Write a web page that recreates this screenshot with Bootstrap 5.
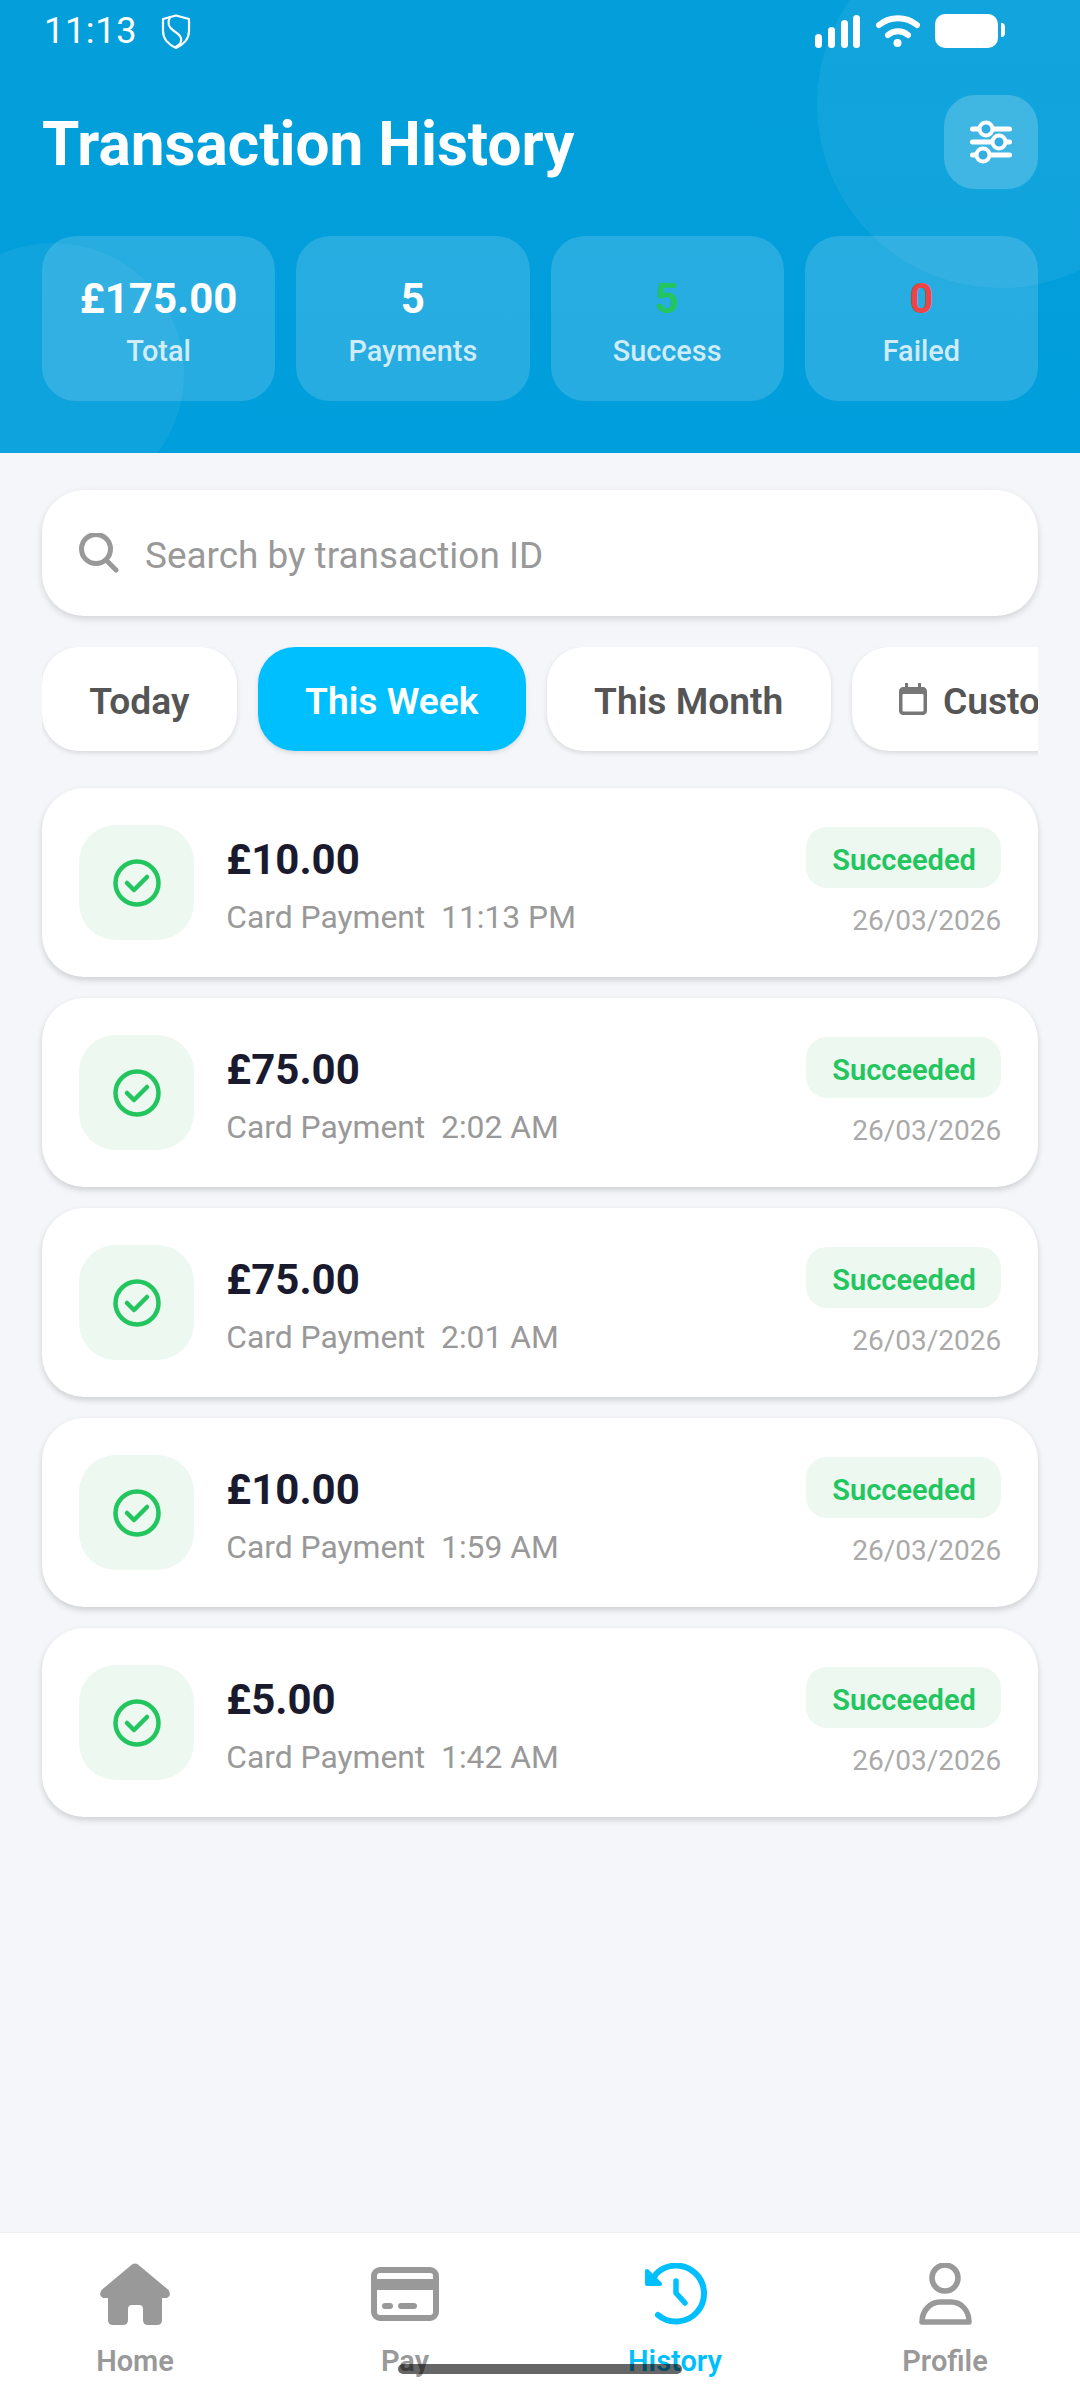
<!DOCTYPE html>
<html lang="en">
<head>
<meta charset="utf-8">
<title>Transaction History</title>
<link href="https://cdn.jsdelivr.net/npm/bootstrap@5.3.0/dist/css/bootstrap.min.css" rel="stylesheet">
<style>
html,body{margin:0;width:1080px;height:2400px;overflow:hidden}
body{font-family:Roboto,"Liberation Sans",sans-serif;background:#f4f6fa}
.app{width:1080px;height:2400px}
.hero{height:453px;padding:0 42px;background:linear-gradient(180deg,#049fda,#009edc);color:#fff;overflow:hidden;flex-shrink:0}
.blob{position:absolute;border-radius:50%;background:rgba(255,255,255,.06);pointer-events:none}
.blob-a{left:817px;top:-79px;width:367px;height:367px}
.blob-b{left:-78px;top:243px;width:262px;height:262px}
.statusline{height:95px;padding:14px 32px 0 2px;align-items:flex-start}
.clock{font-size:36px;line-height:34px;letter-spacing:.7px;margin-right:24px}
.statusicons{gap:15px}
.hero-title{font-size:60.3px;line-height:88px;font-weight:700;margin:0;padding-top:6px;letter-spacing:0}
.filter-btn{width:94px;height:94px;padding:0;border:0;border-radius:31px;background:rgba(255,255,255,.2)}
.stats{gap:21px;margin-top:47px}
.stat{flex:1 1 0;height:165px;border-radius:34px;background:rgba(255,255,255,.15);padding-top:37px}
.stat-value{font-size:42px;line-height:52px;font-weight:700}
.stat-label{font-size:28.875px;line-height:36px;font-weight:500;margin-top:8px;color:rgba(255,255,255,.78)}
.val-ok{color:#22c55e}
.val-bad{color:#ef4444}
.page{padding:37px 42px 0}
.searchbox{height:126px;border-radius:42px;background:#fff;padding-left:37px;gap:26px;box-shadow:0 3px 7px rgba(0,0,0,.14)}
.searchbox .form-control{border:0;padding:5px 0 0;font-size:36.9px;background:transparent;box-shadow:none;color:#333}
.searchbox .form-control::placeholder{color:#999}
.chips{gap:21px;margin-top:31px;overflow:hidden;padding-bottom:6px;margin-bottom:-6px}
.chip{flex-shrink:0;height:104px;padding:5px 47.3px 0;border:0;border-radius:37px;background:#fff;color:#555;font-size:37.2px;font-weight:600;box-shadow:0 2px 5px rgba(0,0,0,.12);white-space:nowrap;gap:16px}
.chip-on{background:#00bfff;color:#fff}
.chip svg{margin-top:-5px}
.txlist{gap:21px;margin-top:37px}
.txcard{border:0;border-radius:42px;box-shadow:0 3px 6px rgba(0,0,0,.16);padding:36.75px;flex-direction:row;align-items:center;gap:32px}
.txicon{width:115.5px;height:115.5px;border-radius:37px;background:#edf8f1;flex-shrink:0}
.amount{font-size:42px;line-height:50px;font-weight:700;color:#1a1a2e;margin-top:5px}
.subline{font-size:31.8px;line-height:38px;color:#999;margin-top:13px;white-space:pre}
.pill{display:block;font-size:29px;line-height:34px;font-weight:600;color:#22c55e;background:#edf8f1;border-radius:21px;padding:16px 28px 11px 26px;width:195px;text-align:center;white-space:nowrap}
.txdate{font-size:28px;line-height:36px;color:#aaa;margin-top:15px}
.tabbar{height:168px;background:#fff;border-top:1px solid #eceef2;padding-top:30px;flex-shrink:0}
.tab{width:270px;color:#999;font-size:29px;font-weight:600;line-height:34px}
.tab svg{display:block;margin-bottom:18px}
.tab-on{color:#00bfff}
.homebar{position:absolute;left:398px;top:2364px;width:284px;height:10px;border-radius:5px;background:rgba(0,0,0,.6)}
</style>
</head>
<body>
<div class="app position-relative d-flex flex-column">
  <header class="hero position-relative">
    <span class="blob blob-a"></span>
    <span class="blob blob-b"></span>
    <div class="statusline d-flex justify-content-between position-relative">
      <div class="d-flex align-items-start">
        <span class="clock">11:13</span>
        <svg width="30" height="36" viewBox="0 0 30 36" fill="none" stroke="#fff" stroke-width="2.2" stroke-linejoin="round" stroke-linecap="round"><path d="M15 1.500 28 5v12c0 8-6 14-13 17C8 31 2 25 2 17V5Z"/><path d="M9 3C6 9 7 13 13 17c6 4 9 7 6 13l-4 3"/></svg>
      </div>
      <div class="statusicons d-flex align-items-start">
        <svg width="46" height="34" viewBox="0 0 46 34" fill="#fff" style="margin-top:1px"><rect x="0" y="19" width="7" height="14" rx="3.500"/><rect x="13" y="12" width="7" height="21" rx="3.500"/><rect x="26" y="5" width="7" height="28" rx="3.500"/><rect x="38" y="0" width="7" height="33" rx="3.500"/></svg>
        <svg width="44" height="34" viewBox="0 0 44 34" fill="none" stroke="#fff" stroke-width="6" stroke-linecap="round" style="margin-top:1px"><path d="M3 10C14 1 30 1 41 10"/><path d="M12 20c6-5 14-5 20 0"/><circle cx="21.500" cy="28" r="4" fill="#fff" stroke="none"/></svg>
        <svg width="71" height="34" viewBox="0 0 71 34" fill="#fff"><rect x="0" y="0" width="63" height="34" rx="10"/><path d="M66 9h1c2 0 3 2 3 4v6c0 2-1 4-3 4h-1Z"/></svg>
      </div>
    </div>
    <div class="d-flex justify-content-between align-items-center position-relative">
      <h1 class="hero-title">Transaction History</h1>
      <button type="button" class="btn filter-btn d-flex align-items-center justify-content-center" aria-label="Filter">
        <svg width="50" height="46" viewBox="0 0 50 46" fill="none" stroke="#fff" stroke-width="5" stroke-linecap="round"><path d="M6.500 10h37M6.500 23h37M6.500 36h37"/><g fill="#33aee2" stroke-width="4"><circle cx="20" cy="10" r="6.500"/><circle cx="33" cy="23" r="6.500"/><circle cx="17" cy="36" r="6.500"/></g></svg>
      </button>
    </div>
    <div class="stats d-flex position-relative">
      <div class="stat text-center"><div class="stat-value">£175.00</div><div class="stat-label">Total</div></div>
      <div class="stat text-center"><div class="stat-value">5</div><div class="stat-label">Payments</div></div>
      <div class="stat text-center"><div class="stat-value val-ok">5</div><div class="stat-label">Success</div></div>
      <div class="stat text-center"><div class="stat-value val-bad">0</div><div class="stat-label">Failed</div></div>
    </div>
  </header>

  <main class="page flex-grow-1">
    <div class="searchbox d-flex align-items-center">
      <svg width="40" height="40" viewBox="0 0 40 40" fill="none" stroke="#999" stroke-width="5" stroke-linecap="round" class="flex-shrink-0"><circle cx="17" cy="16" r="14.500"/><path d="M27 27 37 37"/></svg>
      <input type="text" class="form-control" placeholder="Search by transaction ID">
    </div>

    <div class="chips d-flex">
      <button type="button" class="btn chip d-flex align-items-center">Today</button>
      <button type="button" class="btn chip chip-on d-flex align-items-center">This Week</button>
      <button type="button" class="btn chip d-flex align-items-center">This Month</button>
      <button type="button" class="btn chip d-flex align-items-center">
        <svg width="28" height="32" viewBox="0 0 28 32" class="flex-shrink-0"><path fill="#777" d="M6 0h3v4h10V0h3v4h2c2 0 4 2 4 4v20c0 2-2 4-4 4H4c-2 0-4-2-4-4V8c0-2 2-4 4-4h2Z"/><rect x="3.500" y="11" width="21" height="17.500" rx="1" fill="#fff"/></svg>
        <span>Custom</span>
      </button>
    </div>

    <div class="txlist d-flex flex-column">
      <div class="card txcard">
        <div class="txicon d-flex align-items-center justify-content-center"><svg width="48" height="48" viewBox="0 0 48 48" fill="none" stroke="#22c55e" stroke-width="4.500" stroke-linecap="round" stroke-linejoin="round"><circle cx="24" cy="24" r="21.500"/><path d="M14 24l7 7 13-13"/></svg></div>
        <div class="flex-grow-1"><div class="amount">£10.00</div><div class="subline">Card Payment  11:13 PM</div></div>
        <div class="text-end"><span class="badge pill">Succeeded</span><div class="txdate">26/03/2026</div></div>
      </div>
      <div class="card txcard">
        <div class="txicon d-flex align-items-center justify-content-center"><svg width="48" height="48" viewBox="0 0 48 48" fill="none" stroke="#22c55e" stroke-width="4.500" stroke-linecap="round" stroke-linejoin="round"><circle cx="24" cy="24" r="21.500"/><path d="M14 24l7 7 13-13"/></svg></div>
        <div class="flex-grow-1"><div class="amount">£75.00</div><div class="subline">Card Payment  2:02 AM</div></div>
        <div class="text-end"><span class="badge pill">Succeeded</span><div class="txdate">26/03/2026</div></div>
      </div>
      <div class="card txcard">
        <div class="txicon d-flex align-items-center justify-content-center"><svg width="48" height="48" viewBox="0 0 48 48" fill="none" stroke="#22c55e" stroke-width="4.500" stroke-linecap="round" stroke-linejoin="round"><circle cx="24" cy="24" r="21.500"/><path d="M14 24l7 7 13-13"/></svg></div>
        <div class="flex-grow-1"><div class="amount">£75.00</div><div class="subline">Card Payment  2:01 AM</div></div>
        <div class="text-end"><span class="badge pill">Succeeded</span><div class="txdate">26/03/2026</div></div>
      </div>
      <div class="card txcard">
        <div class="txicon d-flex align-items-center justify-content-center"><svg width="48" height="48" viewBox="0 0 48 48" fill="none" stroke="#22c55e" stroke-width="4.500" stroke-linecap="round" stroke-linejoin="round"><circle cx="24" cy="24" r="21.500"/><path d="M14 24l7 7 13-13"/></svg></div>
        <div class="flex-grow-1"><div class="amount">£10.00</div><div class="subline">Card Payment  1:59 AM</div></div>
        <div class="text-end"><span class="badge pill">Succeeded</span><div class="txdate">26/03/2026</div></div>
      </div>
      <div class="card txcard">
        <div class="txicon d-flex align-items-center justify-content-center"><svg width="48" height="48" viewBox="0 0 48 48" fill="none" stroke="#22c55e" stroke-width="4.500" stroke-linecap="round" stroke-linejoin="round"><circle cx="24" cy="24" r="21.500"/><path d="M14 24l7 7 13-13"/></svg></div>
        <div class="flex-grow-1"><div class="amount">£5.00</div><div class="subline">Card Payment  1:42 AM</div></div>
        <div class="text-end"><span class="badge pill">Succeeded</span><div class="txdate">26/03/2026</div></div>
      </div>
    </div>
  </main>

  <nav class="tabbar d-flex">
    <div class="tab d-flex flex-column align-items-center">
      <svg width="80" height="63" viewBox="0 0 80 63" fill="#999"><path d="M37 1.500Q40-.5 43 1.500L73.500 27Q77 33 72 35H67V57Q67 62 62 62H53Q48 62 48 57V46Q48 42 44 42H37Q33 42 33 46V57Q33 62 28 62H18Q13 62 13 57V35H8Q3 33 6.500 27Z"/></svg>
      <span>Home</span>
    </div>
    <div class="tab d-flex flex-column align-items-center">
      <svg width="80" height="63" viewBox="0 0 80 63" fill="none" stroke="#999" stroke-width="6" stroke-linecap="round"><rect x="9" y="7" width="62" height="48" rx="6"/><rect x="6" y="16" width="68" height="11" fill="#999" stroke="none"/><path d="M20 43h5M36 43h13"/></svg>
      <span>Pay</span>
    </div>
    <div class="tab tab-on d-flex flex-column align-items-center">
      <svg width="80" height="63" viewBox="0 0 80 63" fill="none" stroke="#00bfff" stroke-width="6" stroke-linecap="round" stroke-linejoin="round"><path d="M23 52A28 28 0 1 0 21 11L19 15"/><path d="M12 8V21H25Z" fill="#00bfff" stroke-width="4"/><path d="M41 18V30L50 40" stroke-width="5.500"/></svg>
      <span>History</span>
    </div>
    <div class="tab d-flex flex-column align-items-center">
      <svg width="80" height="63" viewBox="0 0 80 63" fill="none" stroke="#999" stroke-width="5.500" stroke-linejoin="round"><circle cx="40" cy="15" r="13"/><path d="M17 59C17 47 26 39 35 39H46C56 39 64 47 64 59Z"/></svg>
      <span>Profile</span>
    </div>
  </nav>
  <div class="homebar"></div>
</div>
<script src="https://cdn.jsdelivr.net/npm/bootstrap@5.3.0/dist/js/bootstrap.bundle.min.js"></script>
</body>
</html>
